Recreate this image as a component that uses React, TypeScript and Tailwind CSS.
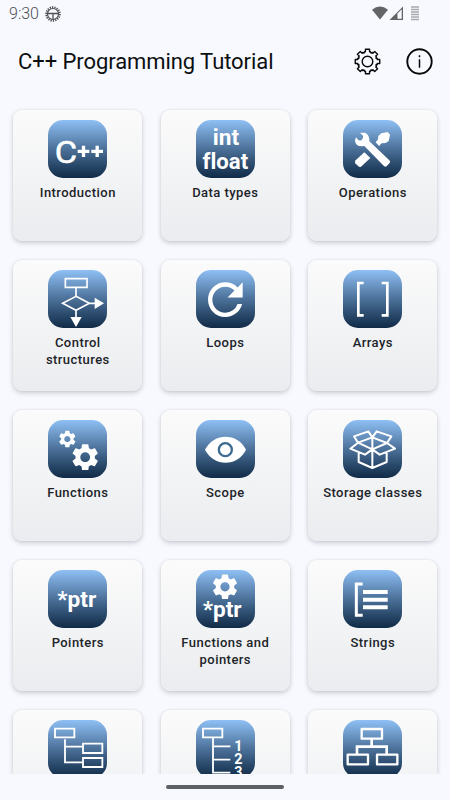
import type { ReactNode } from "react"
import { MdRefresh, MdSettings } from "react-icons/md"

interface Topic {
  id: string
  title?: string
  icon: ReactNode
}

const topics: Topic[] = [
  {
    id: "intro",
    title: "Introduction",
    icon: (
      <>
        <text x="20" y="128" fontSize="95" fill="#fff" stroke="#fff" strokeWidth="1.500" textLength="67" lengthAdjust="spacingAndGlyphs">C</text>
        <path d="M89 94h35M106.500 77v34M130 94h35M147.500 77v34" stroke="#fff" strokeWidth="10" />
      </>
    ),
  },
  {
    id: "types",
    title: "Data types",
    icon: (
      <g className="[font-variant-ligatures:none]" fill="#fff" fontSize="65" fontWeight="700" textAnchor="middle">
        <text x="90" y="74" textLength="79" lengthAdjust="spacingAndGlyphs">int</text>
        <text x="88" y="147" textLength="137" lengthAdjust="spacingAndGlyphs">float</text>
      </g>
    ),
  },
  {
    id: "operations",
    title: "Operations",
    icon: (
      <g fill="#fff">
        <path d="M39 52 36 61Q37 79 56 79L64 78 122 137Q127 142 132 137L140 129Q143 125 139 121L79 64Q80 45 67 38L51 38 60 47Q62 55 55 61Q49 62 46 60Z" />
        <path d="M64 97 82 114 54 140Q50 143 46 139L37 130Q34 126 38 121Z" />
        <path d="M98 67 105 58 106 48 115 40 134 36 141 44 137 63 128 69 116 70 108 78Z" />
      </g>
    ),
  },
  {
    id: "control",
    title: "Control structures",
    icon: (
      <>
        <path d="M52 26h65v26H52ZM84 52v27M84 79 124 100 84 121 44 100ZM124 100h20M84 121v22" fill="none" stroke="#fff" strokeWidth="5" />
        <path d="M140 83 168 100 140 117ZM67 141h34L84 171Z" fill="#fff" />
      </>
    ),
  },
  {
    id: "loops",
    title: "Loops",
    icon: <MdRefresh x="10" y="11" size="156" color="#fff" />,
  },
  {
    id: "arrays",
    title: "Arrays",
    icon: <path d="M62 39H46V136H62M116 39H133V136H116" fill="none" stroke="#fff" strokeWidth="8" />,
  },
  {
    id: "functions",
    title: "Functions",
    icon: (
      <>
        <MdSettings x="27" y="26" size="62" color="#fff" />
        <MdSettings x="63" y="63" size="97" color="#fff" />
      </>
    ),
  },
  {
    id: "scope",
    title: "Scope",
    icon: (
      <>
        <path d="M27 89C54 37 124 37 150 89C124 141 54 141 27 89Z" fill="#fff" />
        <circle cx="88" cy="89" r="19.500" fill="#fff" stroke="#3f6a91" strokeWidth="7" />
      </>
    ),
  },
  {
    id: "storage",
    title: "Storage classes",
    icon: (
      <path
        d="M88 52 76 34 33 49 45 68ZM88 52 101 34 145 49 132 69ZM45 68 88 88 66 104 22 86ZM132 69 88 88 110 104 156 86ZM88 52V144M47 97V126L88 144 131 126V97"
        fill="none"
        stroke="#fff"
        strokeWidth="6"
        strokeLinejoin="round"
      />
    ),
  },
  {
    id: "pointers",
    title: "Pointers",
    icon: (
      <text x="28" y="111" fontSize="66" fontWeight="700" fill="#fff" textLength="117" lengthAdjust="spacingAndGlyphs">*ptr</text>
    ),
  },
  {
    id: "function-pointers",
    title: "Functions and pointers",
    icon: (
      <>
        <MdSettings x="41" y="4.500" size="92" color="#fff" />
        <text x="20" y="142" fontSize="66" fontWeight="700" fill="#fff" textLength="117" lengthAdjust="spacingAndGlyphs">*ptr</text>
      </>
    ),
  },
  {
    id: "strings",
    title: "Strings",
    icon: (
      <>
        <path d="M59 42H40V136H59" fill="none" stroke="#fff" strokeWidth="9" />
        <path d="M60 66h74M60 89h74M60 112h74" stroke="#fff" strokeWidth="12" />
      </>
    ),
  },
  {
    id: "tree",
    icon: (
      <path d="M21 26h58v26H21ZM51 58V127H105M51 80h54M105 71h58v28H105ZM105 114h58v27H105Z" fill="none" stroke="#fff" strokeWidth="5.500" />
    ),
  },
  {
    id: "numbered",
    icon: (
      <>
        <path d="M21 26h58v26H21ZM51 52V158H103M51 79h52M51 119h52" fill="none" stroke="#fff" strokeWidth="5.500" />
        <g fill="#fff" fontSize="43" fontWeight="700" textAnchor="middle">
          <text x="127" y="93">1</text>
          <text x="127" y="131">2</text>
          <text x="127" y="170">3</text>
        </g>
      </>
    ),
  },
  {
    id: "hierarchy",
    icon: (
      <>
        <path d="M86 57V80M42 102V80H131V102" fill="none" stroke="#fff" strokeWidth="8" />
        <path d="M56 27h61v29H56ZM14 104h61v29H14ZM102 104h61v29H102Z" fill="none" stroke="#fff" strokeWidth="7" strokeLinejoin="round" />
      </>
    ),
  },
]

// [degrees from the tooth's axis, radius]
const toothProfile = [
  [-22.5, 9.1],
  [-17, 10.2],
  [-12, 9.9],
  [-9.5, 12.4],
  [9.5, 12.4],
  [12, 9.9],
  [17, 10.2],
]

const gearPoints = Array.from({ length: 8 }, (_, tooth) =>
  toothProfile.map(([offset, radius]) => {
    const angle = ((tooth * 45 + offset) * Math.PI) / 180
    return `${(13.5 + radius * Math.sin(angle)).toFixed(2)},${(13.5 - radius * Math.cos(angle)).toFixed(2)}`
  }).join(" ")
).join(" ")

function StatusBar() {
  return (
    <div className="flex h-[27px] shrink-0 items-center pr-[30px] pl-[9px] text-[#4d5053]">
      <span className="text-[16px] leading-none font-light">9:30</span>
      <svg className="ml-[6px]" width="16" height="16" viewBox="0 0 16 16" fill="none" stroke="currentColor">
        <circle cx="8" cy="8" r="6.800" strokeWidth="1.900" strokeDasharray="1.270 1.100" />
        <circle cx="8" cy="8" r="5.500" strokeWidth="1.200" />
        <path d="M2.500 7.500h11M8 7.500v6" strokeWidth="1.300" />
      </svg>
      <svg className="ml-auto" width="48" height="16" viewBox="0 0 48 16">
        <path d="M0 3.700Q8 -2.500 16 3.700L8 13.500Z" fill="#626466" />
        <path d="M17.500 14 31 .5V14Z" fill="#626466" />
        <path d="M25.500 7.500 29.700 3.300V12.700H25.500Z" fill="#f8f9fe" />
        <path d="M39 1h8M39 3.500h8M39 6h8M39 8.500h8M39 11h8M39 13.500h8" stroke="#a9abad" strokeWidth="1.300" />
      </svg>
    </div>
  )
}

function AppBar() {
  return (
    <header className="flex h-[69px] shrink-0 items-center pr-[17px] pl-[18px]">
      <h1 className="text-[22px] font-normal tracking-[-0.070px] text-[#0c0f11]">C++ Programming Tutorial</h1>
      <svg className="ml-auto" width="27" height="27" viewBox="0 0 27 27" fill="none" stroke="#08090a" strokeWidth="1.400" strokeLinejoin="round">
        <polygon points={gearPoints} />
        <circle cx="13.500" cy="13.500" r="5.300" />
      </svg>
      <svg className="ml-[25.500px]" width="27" height="27" viewBox="0 0 27 27" fill="none" stroke="#08090a">
        <circle cx="13.500" cy="13.500" r="12.200" strokeWidth="1.900" />
        <path d="M13.500 11.200v8.500M13.500 7.300v2" strokeWidth="1.500" />
      </svg>
    </header>
  )
}

function TopicCard({ title, icon }: Omit<Topic, "id">) {
  return (
    <div className="flex h-[131.500px] flex-col items-center rounded-[9px] bg-linear-to-b from-[#fbfbfb] to-[#eaecef] px-2 pt-[10px] shadow-[0_2px_5px_rgba(40,45,60,0.22),0_0_2px_rgba(40,45,60,0.10)]">
      <div className="h-[58.700px] w-[58.700px] shrink-0 overflow-hidden rounded-[15px] bg-linear-to-b from-[#8fc0f5] to-[#102b47]">
        <svg className="block h-full w-full" viewBox="0 0 176 176">
          {icon}
        </svg>
      </div>
      {title && (
        <div className="mt-[5.600px] text-center text-[13px] leading-[17.700px] font-medium tracking-[0.450px] text-[#1c2429]">{title}</div>
      )}
    </div>
  )
}

export default function App() {
  return (
    <div className="flex h-[800px] w-[450px] flex-col overflow-hidden bg-[#f8f9fe] font-['Roboto',sans-serif]">
      <StatusBar />
      <AppBar />
      <main className="min-h-0 flex-1 overflow-hidden">
        <div className="grid grid-cols-3 gap-x-[18.500px] gap-y-[18.500px] pt-[13.500px] pr-[12.700px] pl-[13.300px]">
          {topics.map(({ id, title, icon }) => (
            <TopicCard key={id} title={title} icon={icon} />
          ))}
        </div>
      </main>
      <div className="flex h-[26px] shrink-0 justify-center pt-[11px]">
        <div className="h-[4px] w-[118px] rounded-full bg-[#5e6163]" />
      </div>
    </div>
  )
}
